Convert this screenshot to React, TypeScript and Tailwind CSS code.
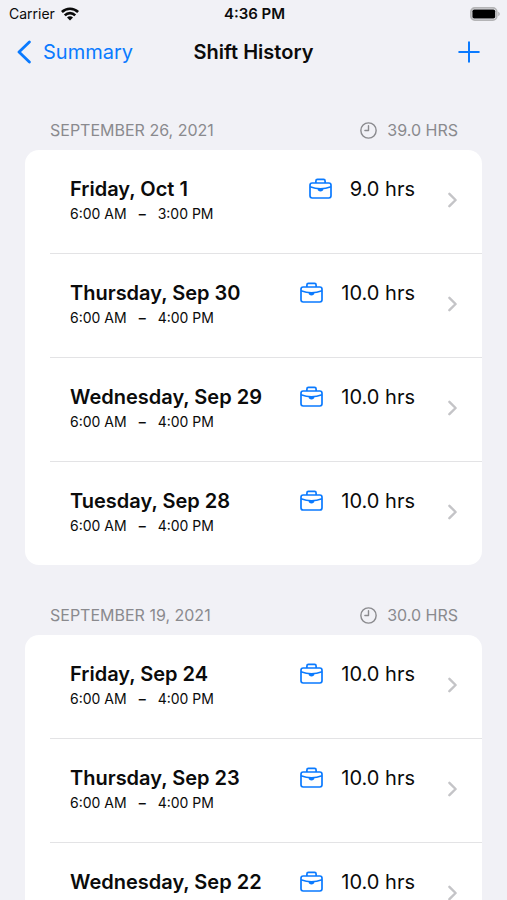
import React from 'react';

interface Shift {
  day: string;
  start: string;
  end: string;
  hours: string;
}

interface Week {
  label: string;
  total: string;
  shifts: Shift[];
}

const weeks: Week[] = [
  {
    label: 'September 26, 2021',
    total: '39.0 hrs',
    shifts: [
      { day: 'Friday, Oct 1', start: '6:00 AM', end: '3:00 PM', hours: '9.0 hrs' },
      { day: 'Thursday, Sep 30', start: '6:00 AM', end: '4:00 PM', hours: '10.0 hrs' },
      { day: 'Wednesday, Sep 29', start: '6:00 AM', end: '4:00 PM', hours: '10.0 hrs' },
      { day: 'Tuesday, Sep 28', start: '6:00 AM', end: '4:00 PM', hours: '10.0 hrs' },
    ],
  },
  {
    label: 'September 19, 2021',
    total: '30.0 hrs',
    shifts: [
      { day: 'Friday, Sep 24', start: '6:00 AM', end: '4:00 PM', hours: '10.0 hrs' },
      { day: 'Thursday, Sep 23', start: '6:00 AM', end: '4:00 PM', hours: '10.0 hrs' },
      { day: 'Wednesday, Sep 22', start: '6:00 AM', end: '4:00 PM', hours: '10.0 hrs' },
    ],
  },
];

const WifiIcon = () => (
  <svg className="h-[14px] w-[18px]" viewBox="0 0 18 14" fill="none" stroke="currentColor" strokeWidth="2.6">
    <path d="M.9 5a11.6 11.6 0 0 1 16.2 0" />
    <path d="M3.8 8.3a7.4 7.4 0 0 1 10.4 0" />
    <path d="M9 13.6 6 10.6a4.2 4.2 0 0 1 6 0Z" fill="currentColor" stroke="none" />
  </svg>
);

const BatteryIcon = () => (
  <svg className="h-[14px] w-[30px]" viewBox="0 0 30 14" fill="none">
    <rect x="0.9" y="0.9" width="25.8" height="12.2" rx="3.8" stroke="#b4b4b6" strokeWidth="1.8" />
    <rect x="2.4" y="2.4" width="22.8" height="9.2" rx="1.8" fill="#000" />
    <path d="M28.2 4.8c1 .4 1.6 1.2 1.6 2.2s-.6 1.8-1.6 2.2Z" fill="#b4b4b6" />
  </svg>
);

const BackIcon = () => (
  <svg className="h-6 w-[14px]" viewBox="0 0 14 24" fill="none" stroke="currentColor" strokeWidth="2.8" strokeLinecap="round" strokeLinejoin="round">
    <path d="M12.4 2 2 12l10.4 10" />
  </svg>
);

const PlusIcon = () => (
  <svg className="h-[22px] w-[22px]" viewBox="0 0 22 22" fill="none" stroke="currentColor" strokeWidth="2" strokeLinecap="round">
    <path d="M11 1.2v19.6M1.2 11h19.6" />
  </svg>
);

const ClockIcon = () => (
  <svg className="h-[17px] w-[17px]" viewBox="0 0 18 18" fill="none" stroke="currentColor" strokeWidth="1.5" strokeLinecap="round" strokeLinejoin="round">
    <circle cx="9" cy="9" r="8.1" />
    <path d="M9 4v5H5.2" />
  </svg>
);

const BriefcaseIcon = () => (
  <svg className="h-[22px] w-[23px]" viewBox="0 0 23 22" fill="none" stroke="currentColor" strokeWidth="1.7" strokeLinejoin="round">
    <rect x="1" y="5" width="21" height="15" rx="2.2" />
    <path d="M6.9 5V2.9c0-.9.6-1.5 1.5-1.5h6.2c.9 0 1.5.6 1.5 1.5V5" />
    <path d="M1 8.8c6.4 2.4 14.6 2.4 21 0" strokeWidth="1.5" />
    <path d="M8.7 10.6h5.6v.7c0 1.3-1.1 2.1-2.8 2.1s-2.8-.8-2.8-2.1Z" fill="currentColor" stroke="none" />
  </svg>
);

const DisclosureIcon = () => (
  <svg className="h-4 w-[9px]" viewBox="0 0 9 16" fill="none" stroke="#c4c4c7" strokeWidth="2.4" strokeLinecap="round" strokeLinejoin="round">
    <path d="M1.4 1.8 7.6 8l-6.2 6.2" />
  </svg>
);

const StatusBar = () => (
  <div className="grid h-7 grid-cols-[1fr_auto_1fr] items-center pr-[7px] pl-[9px] text-sm">
    <div className="flex items-center gap-[6px]">
      <span>Carrier</span>
      <WifiIcon />
    </div>
    <span className="text-[15px] font-semibold">4:36 PM</span>
    <div className="flex justify-end">
      <BatteryIcon />
    </div>
  </div>
);

const NavBar = () => (
  <header className="grid h-12 grid-cols-[1fr_auto_1fr] items-center px-[17px] text-xl">
    <a href="#summary" className="flex items-center gap-3 text-[#0a7aff]">
      <BackIcon />
      Summary
    </a>
    <h1 className="font-semibold">Shift History</h1>
    <div className="flex justify-end pr-[10px]">
      <button type="button" aria-label="Add shift" className="text-[#0a7aff]">
        <PlusIcon />
      </button>
    </div>
  </header>
);

const ShiftRow: React.FC<{ shift: Shift }> = ({ shift }) => (
  <li className="group pl-[25px]">
    <a href="#shift" className="flex h-[104px] items-start border-b border-[#e3e3e5] pt-[26px] pr-[25px] pl-5 group-last:h-[103px] group-last:border-b-0">
      <div className="flex-1">
        <div className="text-xl leading-[26px] font-semibold whitespace-nowrap">{shift.day}</div>
        <div className="flex gap-3 text-sm leading-6">
          <span>{shift.start}</span>
          <span className="font-semibold">–</span>
          <span>{shift.end}</span>
        </div>
      </div>
      <div className="flex h-[26px] items-center gap-[18px] text-xl whitespace-nowrap">
        <span className="text-[#0a7aff]">
          <BriefcaseIcon />
        </span>
        {shift.hours}
      </div>
      <div className="ml-[33px] flex h-12 items-center">
        <DisclosureIcon />
      </div>
    </a>
  </li>
);

const WeekSection: React.FC<{ week: Week }> = ({ week }) => (
  <section>
    <div className="flex h-10 items-center justify-between pr-6 pl-[25px] text-base text-[#8a8a8e] uppercase">
      <h2>{week.label}</h2>
      <div className="flex items-center gap-[10px]">
        <ClockIcon />
        <span>{week.total}</span>
      </div>
    </div>
    <ul className="rounded-[14px] bg-white">
      {week.shifts.map((shift) => (
        <ShiftRow key={shift.day} shift={shift} />
      ))}
    </ul>
  </section>
);

export default function App() {
  return (
    <div className="flex h-screen flex-col bg-[#f1f1f6] font-['Inter',sans-serif] text-[#0b0b0b]">
      <StatusBar />
      <NavBar />
      <main className="flex flex-1 flex-col gap-[30px] overflow-y-auto px-[25px] pt-[34px] [scrollbar-width:none]">
        {weeks.map((week) => (
          <WeekSection key={week.label} week={week} />
        ))}
      </main>
    </div>
  );
}
